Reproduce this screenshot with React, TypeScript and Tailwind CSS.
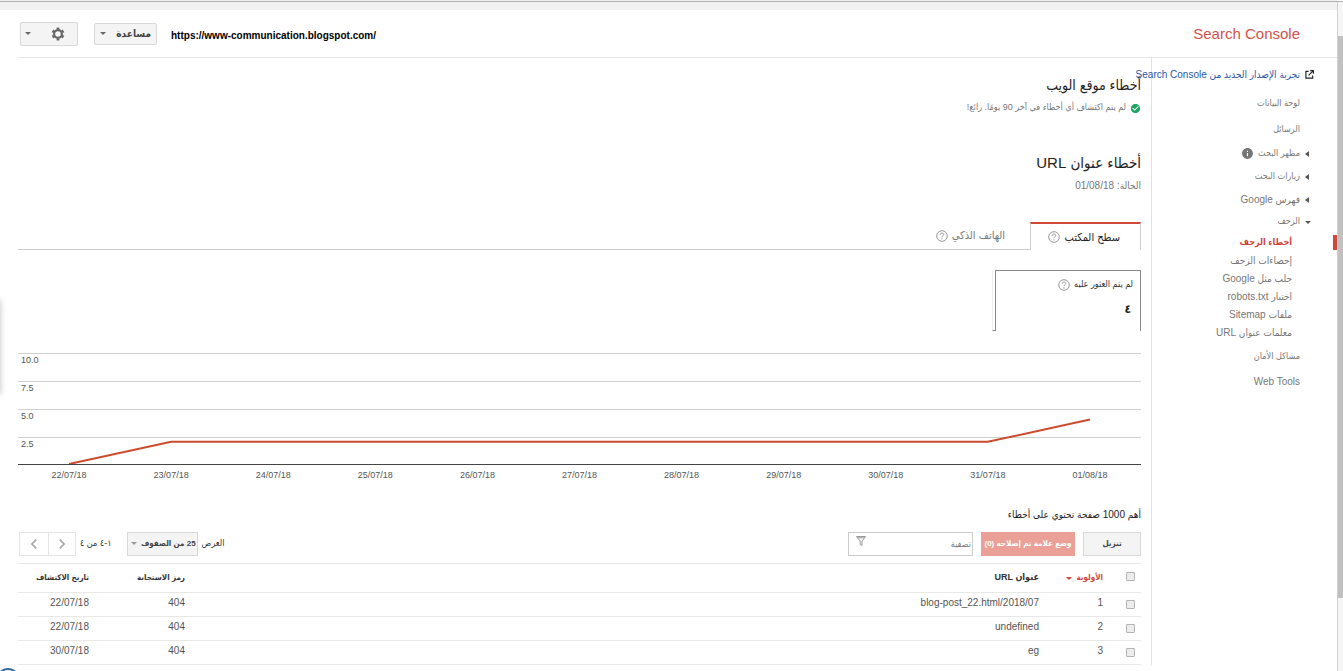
import type { ReactNode } from "react";
import clsx from "clsx";
import { MdCheckCircle, MdChevronLeft, MdChevronRight, MdInfo } from "react-icons/md";

const subItems = ["أخطاء الزحف", "إحصاءات الزحف", "جلب مثل Google", "اختبار robots.txt", "ملفات Sitemap", "معلمات عنوان URL"];

const gridLabels = ["10.0", "7.5", "5.0", "2.5"];

const series = [
  { date: "22/07/18", errors: 0 },
  { date: "23/07/18", errors: 2 },
  { date: "24/07/18", errors: 2 },
  { date: "25/07/18", errors: 2 },
  { date: "26/07/18", errors: 2 },
  { date: "27/07/18", errors: 2 },
  { date: "28/07/18", errors: 2 },
  { date: "29/07/18", errors: 2 },
  { date: "30/07/18", errors: 2 },
  { date: "31/07/18", errors: 2 },
  { date: "01/08/18", errors: 4 },
];

const rows = [
  { priority: 1, url: "blog-post_22.html/2018/07", code: 404, date: "22/07/18" },
  { priority: 2, url: "undefined", code: 404, date: "22/07/18" },
  { priority: 3, url: "eg", code: 404, date: "30/07/18" },
];

const grayButton = "shrink-0 border border-[#d8d8d8] bg-[#f4f4f4] text-[#444]";

function Caret({ className }: { className?: string }) {
  return (
    <svg viewBox="0 0 6 3" className={clsx("h-[3px] w-[6px] shrink-0 fill-current", className)} aria-hidden="true">
      <path d="M0 0h6L3 3z" />
    </svg>
  );
}

function GearIcon() {
  return (
    <svg viewBox="0 0 14 14" className="size-[14px] shrink-0" fill="none" stroke="#666" aria-hidden="true">
      <circle cx="7" cy="7" r="3.9" strokeWidth="2.2" />
      <circle cx="7" cy="7" r="5.6" strokeWidth="1.8" pathLength="12" strokeDasharray="1 1" strokeDashoffset="-0.5" />
    </svg>
  );
}

function HelpIcon() {
  return (
    <svg viewBox="0 0 12 12" className="size-3 shrink-0 text-[#999]" fill="none" stroke="currentColor" aria-hidden="true">
      <circle cx="6" cy="6" r="5.3" />
      <path d="M4.2 4.900c0-1.200.8-1.900 1.800-1.900s1.800.7 1.800 1.600C7.800 5.700 6 5.800 6 7.200M6 8.200v1.200" />
    </svg>
  );
}

function NavItem({ children, icon, className }: { children: ReactNode; icon?: ReactNode; className?: string }) {
  return (
    <li className={clsx("flex items-center", className)}>
      <span className="flex w-[37px] shrink-0 justify-end pl-[5px]">{icon}</span>
      {children}
    </li>
  );
}

function Sidebar() {
  const closed = (
    <svg viewBox="0 0 4 6" className="h-[6px] w-1 fill-[#555]" aria-hidden="true">
      <path d="M4 0v6L0 3z" />
    </svg>
  );

  return (
    <nav className="w-[186px] shrink-0 border-l border-[#e2e2e2] pt-[6px] text-[10px] whitespace-nowrap text-[#777]">
      <ul>
        <NavItem
          className="mb-[6px] h-5"
          icon={
            <svg viewBox="0 0 10 10" className="size-[9px]" fill="none" stroke="#222" strokeWidth="1.3" aria-hidden="true">
              <path d="M4 1.500H1v7.500h7.500V6M5.800.7h3.500v3.500M9 1L4 6" />
            </svg>
          }
        >
          <a href="#new" className="text-[#2a56a8]">تجربة الإصدار الجديد من Search Console</a>
        </NavItem>
        <NavItem className="h-[26px] pt-px text-[9px]"><a href="#dashboard">لوحة البيانات</a></NavItem>
        <NavItem className="h-[26px] pt-px text-[9px]"><a href="#messages">الرسائل</a></NavItem>
        <NavItem className="h-[23px] text-[9px]" icon={closed}>
          <a href="#appearance">مظهر البحث</a>
          <MdInfo className="mr-1 size-[13px] text-[#757575]" />
        </NavItem>
        <NavItem className="h-[23px] text-[9px]" icon={closed}><a href="#traffic">زيارات البحث</a></NavItem>
        <NavItem className="h-[23px]" icon={closed}><a href="#index">فهرس Google</a></NavItem>
        <NavItem className="h-[22px] text-[9px]" icon={<Caret className="text-[#555]" />}><a href="#crawl">الزحف</a></NavItem>
        {subItems.map((item, i) => (
          <li key={item} className="flex h-[18px] items-center">
            <span className={clsx("ml-[41px] h-[15px] w-1 shrink-0", i === 0 && "bg-[#d04a3c]")} />
            <a href="#crawl" className={clsx(i === 0 && "pt-px text-[9px] font-bold text-[#d0443a]")}>{item}</a>
          </li>
        ))}
        <NavItem className="mt-[2px] h-[26px] pt-px text-[9px]"><a href="#security">مشاكل الأمان</a></NavItem>
        <NavItem className="h-6"><a href="#tools">Web Tools</a></NavItem>
      </ul>
    </nav>
  );
}

function Chart() {
  const points = series.map((p, i) => `${50 + i * 100},${100 - p.errors * 10}`).join(" ");

  return (
    <div dir="ltr" className="mt-[22px] text-[9px] text-[#555]">
      <div className="relative h-28 border-b border-[#444]">
        {gridLabels.map((label) => (
          <div key={label} className="h-[28px] border-t border-[#cfd0d0] pt-px pl-[3px] leading-[11px]">{label}</div>
        ))}
        <svg viewBox="0 0 1100 100" preserveAspectRatio="none" className="absolute inset-0 size-full" fill="none" aria-label="الأخطاء">
          <polyline points={points} stroke="#cc4b2c" strokeWidth="2" vectorEffect="non-scaling-stroke" />
        </svg>
      </div>
      <div className="flex pt-1 leading-[12px]">
        {series.map((p) => (
          <span key={p.date} className="flex-1 text-center">{p.date}</span>
        ))}
      </div>
    </div>
  );
}

function Toolbar() {
  return (
    <div className="mt-[10px] flex items-center text-[9px]">
      <button className={clsx(grayButton, "h-6 w-[58px] text-[8px] font-bold")}>تنزيل</button>
      <button className="mr-2 h-6 w-[94px] shrink-0 bg-[#eaa097] text-[8px] font-bold whitespace-nowrap text-white">وضع علامة تم إصلاحه (0)</button>
      <div className="relative mr-2">
        <input type="text" aria-label="تصفية" placeholder="تصفية" className="block h-6 w-[125px] border border-[#ccc] px-px placeholder:text-[#777]" />
        <svg viewBox="0 0 10 10" className="absolute top-1 left-2 size-[10px]" fill="none" stroke="#999" aria-hidden="true">
          <path d="M.5.5h9L6 5v4.500L4.200 8.500V5zM1 1.800h8" />
        </svg>
      </div>
      <div className="flex-1" />
      <label htmlFor="page-size" className="ml-1 text-[#333]">العرض</label>
      <div className="relative ml-[15px]">
        <select id="page-size" className={clsx(grayButton, "block h-6 w-[71px] appearance-none pr-px text-[8px] font-bold")}>
          <option>25 من الصفوف</option>
          <option>50 من الصفوف</option>
        </select>
        <Caret className="absolute top-[10px] left-1 text-[#999]" />
      </div>
      <span className="ml-1 text-[#333]">١-٤ من ٤</span>
      <div className="ml-px flex text-[#aaa]">
        <button aria-label="السابق" className="flex h-6 w-7 items-center justify-center border border-[#e4e4e4]">
          <MdChevronRight className="size-5" />
        </button>
        <button aria-label="التالي" className="flex h-6 w-[29px] items-center justify-center border border-r-0 border-[#e4e4e4]">
          <MdChevronLeft className="size-5" />
        </button>
      </div>
    </div>
  );
}

function Check({ label }: { label: string }) {
  return <input type="checkbox" aria-label={label} className="mr-[6px] block size-[9px] appearance-none rounded-[1px] border border-[#b4b4b4] bg-[#ececec]" />;
}

function ErrorTable() {
  return (
    <table className="mt-[7px] w-full table-fixed border-t border-[#e8e8e8] text-[10px] text-[#555]">
      <thead>
        <tr className="h-[29px] border-b border-[#e8e8e8] text-right text-[8px] text-[#333]">
          <th className="w-[38px] pb-1"><Check label="تحديد الكل" /></th>
          <th className="w-16 text-[#d0443a]">
            <span className="flex items-center gap-1">الأولوية <Caret /></span>
          </th>
          <th className="text-[9px]">عنوان URL</th>
          <th className="w-24">رمز الاستجابة</th>
          <th className="w-[71px]">تاريخ الاكتشاف</th>
        </tr>
      </thead>
      <tbody>
        {rows.map((row) => (
          <tr key={row.priority} className="h-6 border-b border-[#e8e8e8]">
            <td><Check label={row.url} /></td>
            <td className="pb-1">{row.priority}</td>
            <td className="pb-1"><a href="#error" dir="ltr">{row.url}</a></td>
            <td className="pb-1">{row.code}</td>
            <td className="pb-1">{row.date}</td>
          </tr>
        ))}
      </tbody>
    </table>
  );
}

export default function App() {
  return (
    <div dir="rtl" className="relative flex h-screen overflow-hidden bg-white font-['Liberation_Sans','DejaVu_Sans_Condensed','DejaVu_Sans',sans-serif]">
      {/* Scrollbar */}
      <div className="mt-[2px] w-[6px] shrink-0 border-l border-[#d0d0d0] bg-[#f6f6f6] pt-[34px]">
        <div className="h-[562px] bg-[#c1c1c1]" />
      </div>

      <div className="min-w-0 flex-1">
        <div className="h-[10px] bg-[#f1f1f1]" />
        <header dir="ltr" className="ml-[18px] flex h-12 items-center border-b border-[#e5e5e5] pr-[37px] pl-[2px]">
          <button aria-label="الإعدادات" className={clsx(grayButton, "flex h-6 w-[58px] items-center rounded-[2px] pl-1")}>
            <Caret className="text-[#666]" />
            <span className="ml-5"><GearIcon /></span>
          </button>
          <button className={clsx(grayButton, "ml-4 flex h-[22px] w-[63px] items-center justify-between rounded-[2px] px-[5px] text-[10px] font-bold")}>
            <Caret className="text-[#666]" />
            مساعدة
          </button>
          <span className="ml-[14px] flex-1 pt-1 text-[10px] font-bold text-black">https://www-communication.blogspot.com/</span>
          <h1 className="pt-px text-[15px] text-[#d2524a]">Search Console</h1>
        </header>

        <div className="flex">
          <Sidebar />
          <main className="min-w-0 flex-1 pt-4 pr-[10px] pl-[18px]">
            <h2 className="text-[14px] leading-[22px] text-[#222]">أخطاء موقع الويب</h2>
            <p className="mt-1 flex h-4 items-center gap-1 text-[9px] text-[#777]">
              <MdCheckCircle className="size-[11px] text-[#1fa463]" />
              لم يتم اكتشاف أي أخطاء في آخر 90 يومًا. رائع!
            </p>
            <h2 className="mt-9 text-[15px] leading-[22px] text-[#222]">أخطاء عنوان URL</h2>
            <p className="mt-1 text-[10px] leading-4 text-[#777]">الحالة: 01/08/18</p>

            <div className="mt-7 flex h-7 text-[11px]">
              <button className="flex w-[111px] items-center gap-1 border-x border-t-2 border-x-[#ccc] border-t-[#d14836] pr-5 text-[#222]">
                سطح المكتب <HelpIcon />
              </button>
              <button className="flex flex-1 items-center gap-1 border-b border-[#ccc] pr-[25px] text-[#777]">
                الهاتف الذكي <HelpIcon />
              </button>
            </div>

            <div className="mt-5 flex">
              <div className="h-[61px] w-[146px] border border-b-0 border-[#888] px-[7px] pt-[6px]">
                <div className="flex h-4 items-center gap-1 text-[9px] text-[#333]">
                  لم يتم العثور عليه <HelpIcon />
                </div>
                <div className="mt-2 pr-[2px] text-[12px] leading-4 font-bold text-[#222]">٤</div>
              </div>
              <div className="w-[3px] border-b border-l border-b-[#888] border-l-[#eee]" />
            </div>

            <Chart />

            <h3 className="mt-[27px] text-[10px] leading-[14px] text-[#222]">أهم 1000 صفحة تحتوي على أخطاء</h3>
            <Toolbar />
            <ErrorTable />
          </main>
        </div>
      </div>

      <div className="absolute inset-x-0 top-px h-px bg-[#b0b4b0]" />
      {/* Edges of the floating panel and the bubble that sit off the left side */}
      <div className="absolute top-[300px] -left-5 h-[94px] w-5 shadow-[0_0_6px_rgba(0,0,0,0.25)]" />
      <div className="absolute top-[668px] -left-1 size-6 rounded-full border-2 border-[#2f6496]" />
    </div>
  );
}
